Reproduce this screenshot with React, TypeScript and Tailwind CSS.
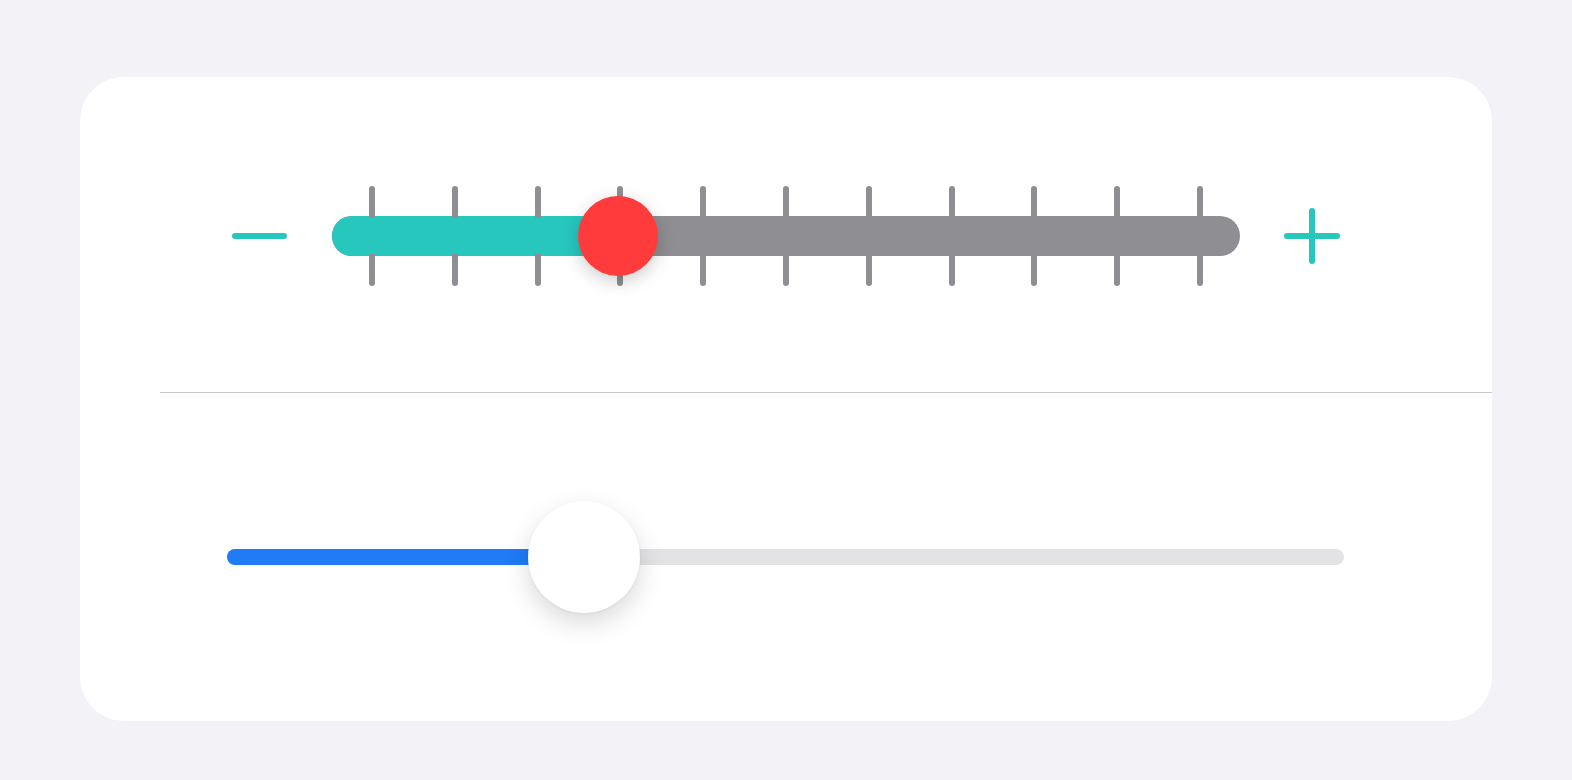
import React from "react";

const TICKS = Array.from({ length: 11 }, (_, i) => i);

function StepSlider({ value }: { value: number }) {
  // value is 0..1 along the track
  return (
    <div className="flex h-[100px] items-center pl-[152px]">
      <button type="button" className="flex h-[56px] w-[56px] items-center">
        <span className="block h-[6px] w-[55px] rounded-full bg-[#27c7bd]" />
      </button>

      <div className="relative ml-[44px] h-[100px] w-[908px]">
        <div className="absolute inset-x-0 top-[30px] h-[40px] rounded-full bg-[#8e8e93]" />
        <div
          className="absolute left-0 top-[30px] h-[40px] rounded-l-full bg-[#27c7bd]"
          style={{ width: `${value * 100}%` }}
        />
        <div className="absolute inset-x-[37px] top-0 flex h-full justify-between">
          {TICKS.map((t) => (
            <span key={t} className="flex h-full w-[6px] flex-col justify-between">
              <span className="block h-[32px] w-[6px] rounded-t-full bg-[#8e8e93]" />
              <span className="block h-[32px] w-[6px] rounded-b-full bg-[#8e8e93]" />
            </span>
          ))}
        </div>
        <div
          className="absolute top-[10px] h-[80px] w-[80px] -translate-x-1/2 rounded-full bg-[#ff3b3b] shadow-[0_5px_18px_rgba(0,0,0,0.2)]"
          style={{ left: `${value * 100}%` }}
        />
      </div>

      <button type="button" className="relative ml-[44px] h-[56px] w-[56px]">
        <span className="absolute left-0 top-[25px] block h-[6px] w-[56px] rounded-full bg-[#27c7bd]" />
        <span className="absolute left-[25px] top-0 block h-[56px] w-[6px] rounded-full bg-[#27c7bd]" />
      </button>
    </div>
  );
}

function PlainSlider({ value }: { value: number }) {
  return (
    <div className="flex h-[112px] items-center pl-[147px]">
      <div className="relative h-[112px] w-[1117px]">
        <div className="absolute inset-x-0 top-[48px] h-[16px] rounded-full bg-[#e3e3e6]" />
        <div
          className="absolute left-0 top-[48px] h-[16px] rounded-l-full bg-[#1f7bf6]"
          style={{ width: `${value * 100}%` }}
        />
        <div
          className="absolute top-0 h-[112px] w-[112px] -translate-x-1/2 rounded-full bg-white shadow-[0_10px_26px_rgba(0,0,0,0.15),0_1px_3px_rgba(0,0,0,0.06)]"
          style={{ left: `${value * 100}%` }}
        />
      </div>
    </div>
  );
}

export default function App() {
  return (
    <div className="min-h-screen bg-[#f2f2f7] px-[80px] pt-[77px] font-['Inter',sans-serif]">
      <div className="flex h-[644px] w-[1412px] flex-col rounded-[44px] bg-white">
        <div className="h-[315px] pt-[109px]">
          <StepSlider value={0.315} />
        </div>
        <div className="ml-[80px] h-px bg-[#c6c6c8]" />
        <div className="pt-[108px]">
          <PlainSlider value={0.32} />
        </div>
      </div>
    </div>
  );
}
